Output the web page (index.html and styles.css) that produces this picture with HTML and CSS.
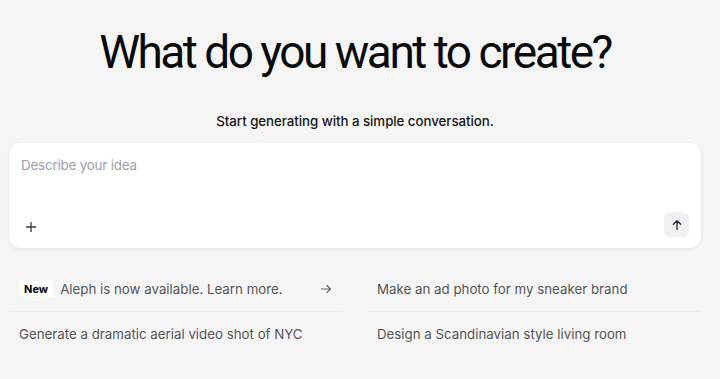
FILE: index.html
```html
<!DOCTYPE html>
<html>
<head>
<meta charset="utf-8">
<link rel="stylesheet" href="styles.css">
</head>
<body>
<main class="page">
  <h1 class="title">What do you want to create?</h1>
  <p class="subtitle">Start generating with a simple conversation.</p>
  <section class="composer">
    <div class="placeholder">Describe your idea</div>
    <div class="composer-bar">
      <button class="icon-btn plus" aria-label="Add">
        <svg width="12" height="12" viewBox="0 0 12 12"><path d="M6 1v10M1 6h10" stroke="#3a3a3a" stroke-width="1.3" fill="none"/></svg>
      </button>
      <button class="icon-btn send" aria-label="Send">
        <svg width="12" height="12" viewBox="0 0 12 12"><path d="M6 10.5V1.8M2.3 5.3L6 1.6l3.7 3.7" stroke="#2b2f38" stroke-width="1.3" fill="none" stroke-linecap="round" stroke-linejoin="round"/></svg>
      </button>
    </div>
  </section>
  <section class="suggestions">
    <div class="item">
      <span class="badge">New</span>
      <span class="item-text">Aleph is now available. Learn more.</span>
      <svg class="arrow" width="12" height="12" viewBox="0 0 12 12"><path d="M1.5 6h9M6.8 2.3L10.5 6 6.8 9.7" stroke="#666" stroke-width="1.2" fill="none" stroke-linecap="round" stroke-linejoin="round"/></svg>
    </div>
    <div class="item"><span class="item-text">Make an ad photo for my sneaker brand</span></div>
    <div class="item last"><span class="item-text">Generate a dramatic aerial video shot of NYC</span></div>
    <div class="item last"><span class="item-text">Design a Scandinavian style living room</span></div>
  </section>
</main>
</body>
</html>
```
FILE: styles.css
```css
html, body {
  margin: 0;
  padding: 0;
  background: #f5f5f5;
}
body {
  font-family: Inter, "Noto Sans", sans-serif;
  color: #111;
}
.page {
  width: 692px;
  margin-left: 9px;
  display: flex;
  flex-direction: column;
}
.title {
  margin: 22px 0 0;
  text-align: center;
  font-family: Roboto, Inter, sans-serif;
  font-size: 46px;
  font-weight: 400;
  letter-spacing: -2.5px;
  line-height: 60px;
  color: #0a0a0a;
}
.subtitle {
  margin: 30px 0 0;
  text-align: center;
  font-size: 13.3px;
  font-weight: 500;
  line-height: 18px;
  color: #151515;
  letter-spacing: -0.05px;
}
.composer {
  margin-top: 13px;
  background: #fff;
  border-radius: 11px;
  box-shadow: 0 1px 4px rgba(0,0,0,0.07), 0 0 1px rgba(0,0,0,0.06);
  height: 105px;
  box-sizing: border-box;
  padding: 13px 12px 11px 12px;
  display: flex;
  flex-direction: column;
  justify-content: space-between;
}
.placeholder {
  font-size: 13.4px;
  line-height: 18px;
  color: #9aa0aa;
  letter-spacing: -0.2px;
}
.composer-bar {
  display: flex;
  justify-content: space-between;
  align-items: center;
}
.icon-btn {
  border: 0;
  padding: 0;
  display: flex;
  align-items: center;
  justify-content: center;
  background: transparent;
}
.plus {
  width: 20px;
  height: 20px;
  margin-top: 4px;
}
.send {
  width: 25px;
  height: 25px;
  border-radius: 6px;
  background: #eef0f4;
}
.suggestions {
  margin-top: 19px;
  display: grid;
  grid-template-columns: 1fr 1fr;
  column-gap: 24px;
}
.item {
  height: 44px;
  display: flex;
  align-items: center;
  padding: 0 11px 0 10px;
  border-bottom: 1px solid #ececec;
  font-size: 13.3px;
  color: #555;
}
.item.last {
  border-bottom-color: transparent;
}
.badge {
  background: #fff;
  color: #000;
  font-weight: 700;
  font-size: 11px;
  padding: 0 5px;
  height: 16px;
  line-height: 16px;
  border-radius: 3px;
  margin-right: 7px;
}
.item-text {
  flex: 1;
}
.arrow {
  margin-right: 0;
}
```
